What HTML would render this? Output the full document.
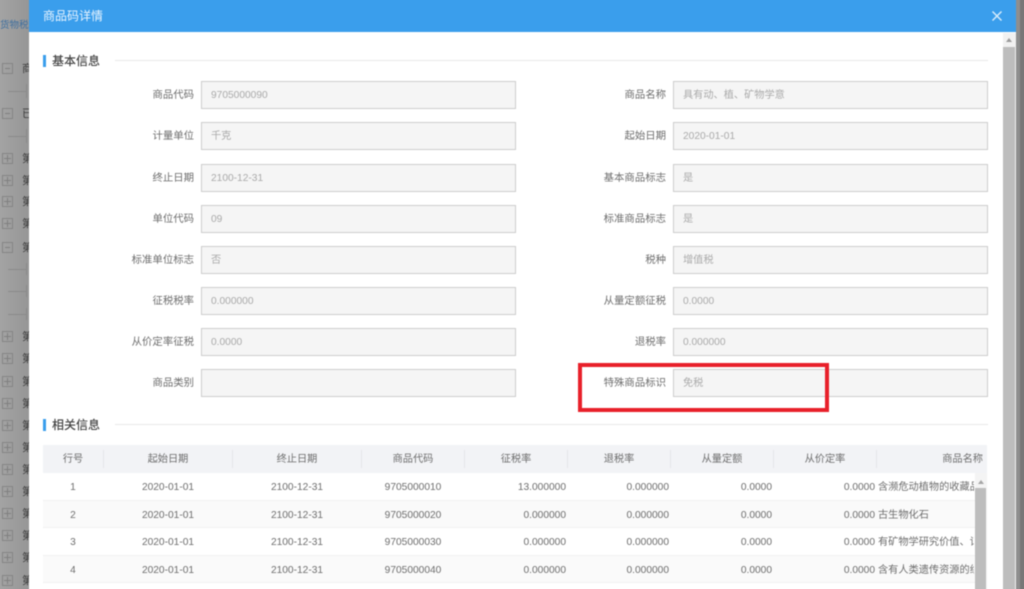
<!DOCTYPE html>
<html lang="zh">
<head>
<meta charset="utf-8">
<title>商品码详情</title>
<style>
html,body{margin:0;padding:0;width:1024px;height:589px;overflow:hidden;background:#9e9e9e}
#clip{position:absolute;left:0;top:0;width:1024px;height:589px;overflow:hidden;contain:strict}
#root{position:absolute;left:0;top:0;width:1024px;height:589px;overflow:visible;filter:blur(.55px);font-family:"Liberation Sans","Noto Sans CJK SC",sans-serif;color:#666}
#root div{position:absolute;box-sizing:border-box;white-space:nowrap}
.bk{left:-6px;top:-6px;width:35px;height:601px;background:linear-gradient(90deg,#a6a6a6,#969696)}
.brt{left:1016px;top:-6px;width:14px;height:601px;background:linear-gradient(90deg,#8e8e8e,#8e8e8e 4px,#777 4px,#777)}
.tb{left:2px;width:11px;height:11px;border:1px solid #858585;background:linear-gradient(#808080,#808080) center/5px 1px no-repeat}
.p{background:linear-gradient(#808080,#808080) center/7px 1px no-repeat,linear-gradient(#808080,#808080) center/1px 7px no-repeat}
.tt{left:22px;width:7px;overflow:hidden;font-size:11px;line-height:12px;color:#3c3c3c}
.tl{background:#8a8a8a}
.m{left:29px;top:0;width:987px;height:595px;background:#fff}
.h{left:29px;top:-6px;width:987px;height:38px;background:#3a9eec;color:#e8f4ff;font-size:12px;line-height:32px;padding:6px 0 0 14px}
.bar{left:43px;width:3px;height:12px;background:#3a9eec}
.st{left:52px;font-size:12px;line-height:16px;color:#444;font-weight:500}
.ln{left:115px;width:873px;height:1px;background:#e8e8e8}
.l{width:150px;height:28px;line-height:29px;text-align:right;font-size:10.4px;color:#6e6e6e}
.i{width:315px;height:28px;background:#f5f5f5;border:1px solid #cdcdcd;line-height:28px;padding-left:9px;font-size:10.2px;color:#aaa}
.th{top:445px;left:43px;width:944px;height:28px;background:#f2f3f6}
.dv{top:450px;width:1px;height:18px;background:#e4e5e9}
.c{height:16px;line-height:16px;font-size:10.2px;color:#6e6e6e;text-align:center}
.r{text-align:right}
.tr{left:43px;width:932px;height:27px;background:#fafafa}
.hl{left:43px;width:932px;height:1px;background:#f0f0f0}
.rb{left:578px;top:363px;width:251px;height:49px;border:4px solid #e8202a}
</style>
</head>
<body>
<div id="clip">
<div id="root">
<div class="bk"></div>
<div class="brt"></div>
<div class="c" style="left:0;top:18px;width:29px;overflow:hidden;text-align:left;color:#3f6f9f;font-size:9.5px">货物税</div>

<div class="tb" style="top:63px"></div><div class="tt" style="top:63px">商</div>
<div class="tb" style="top:108px"></div><div class="tt" style="top:108px">已</div>
<div class="tb p" style="top:153px"></div><div class="tt" style="top:153px">第</div>
<div class="tb p" style="top:175px"></div><div class="tt" style="top:175px">第</div>
<div class="tb p" style="top:196px"></div><div class="tt" style="top:196px">第</div>
<div class="tb p" style="top:218px"></div><div class="tt" style="top:218px">第</div>
<div class="tb" style="top:242px"></div><div class="tt" style="top:242px">第</div>
<div class="tb p" style="top:331px"></div><div class="tt" style="top:331px">第</div>
<div class="tb p" style="top:353px"></div><div class="tt" style="top:353px">第</div>
<div class="tb p" style="top:376px"></div><div class="tt" style="top:376px">第</div>
<div class="tb p" style="top:398px"></div><div class="tt" style="top:398px">第</div>
<div class="tb p" style="top:420px"></div><div class="tt" style="top:420px">第</div>
<div class="tb p" style="top:442px"></div><div class="tt" style="top:442px">第</div>
<div class="tb p" style="top:464px"></div><div class="tt" style="top:464px">第</div>
<div class="tb p" style="top:486px"></div><div class="tt" style="top:486px">第</div>
<div class="tb p" style="top:508px"></div><div class="tt" style="top:508px">第</div>
<div class="tb p" style="top:530px"></div><div class="tt" style="top:530px">第</div>
<div class="tb p" style="top:552px"></div><div class="tt" style="top:552px">第</div>
<div class="tb p" style="top:575px"></div><div class="tt" style="top:575px">第</div>
<div class="tl" style="left:8px;top:91px;width:18px;height:1px"></div>
<div class="tl" style="left:8px;top:136px;width:18px;height:1px"></div>
<div class="tl" style="left:8px;top:269px;width:18px;height:1px"></div>
<div class="tl" style="left:8px;top:291px;width:18px;height:1px"></div>
<div class="tl" style="left:8px;top:314px;width:18px;height:1px"></div>
<div class="tl" style="left:26px;top:84px;width:1px;height:14px"></div>
<div class="tl" style="left:26px;top:129px;width:1px;height:14px"></div>
<div class="tl" style="left:26px;top:263px;width:1px;height:12px"></div>
<div class="tl" style="left:26px;top:285px;width:1px;height:12px"></div>
<div class="tl" style="left:26px;top:308px;width:1px;height:12px"></div>

<div class="m"></div>
<div class="h">商品码详情</div>
<svg style="position:absolute;left:991px;top:10px" width="12" height="12" viewBox="0 0 12 12"><path d="M1.5 1.5L10.5 10.5M10.5 1.5L1.5 10.5" stroke="#d6ebfb" stroke-width="1.5" fill="none"/></svg>

<div class="bar" style="top:55px"></div>
<div class="st" style="top:53px">基本信息</div>
<div class="ln" style="top:60px"></div>

<div class="l" style="left:44px;top:81px">商品代码</div><div class="i" style="left:201px;top:81px">9705000090</div>
<div class="l" style="left:516px;top:81px">商品名称</div><div class="i" style="left:673px;top:81px">具有动、植、矿物学意</div>
<div class="l" style="left:44px;top:122px">计量单位</div><div class="i" style="left:201px;top:122px">千克</div>
<div class="l" style="left:516px;top:122px">起始日期</div><div class="i" style="left:673px;top:122px">2020-01-01</div>
<div class="l" style="left:44px;top:164px">终止日期</div><div class="i" style="left:201px;top:164px">2100-12-31</div>
<div class="l" style="left:516px;top:164px">基本商品标志</div><div class="i" style="left:673px;top:164px">是</div>
<div class="l" style="left:44px;top:205px">单位代码</div><div class="i" style="left:201px;top:205px">09</div>
<div class="l" style="left:516px;top:205px">标准商品标志</div><div class="i" style="left:673px;top:205px">是</div>
<div class="l" style="left:44px;top:246px">标准单位标志</div><div class="i" style="left:201px;top:246px">否</div>
<div class="l" style="left:516px;top:246px">税种</div><div class="i" style="left:673px;top:246px">增值税</div>
<div class="l" style="left:44px;top:287px">征税税率</div><div class="i" style="left:201px;top:287px">0.000000</div>
<div class="l" style="left:516px;top:287px">从量定额征税</div><div class="i" style="left:673px;top:287px">0.0000</div>
<div class="l" style="left:44px;top:328px">从价定率征税</div><div class="i" style="left:201px;top:328px">0.0000</div>
<div class="l" style="left:516px;top:328px">退税率</div><div class="i" style="left:673px;top:328px">0.000000</div>
<div class="l" style="left:44px;top:369px">商品类别</div><div class="i" style="left:201px;top:369px"></div>
<div class="l" style="left:516px;top:369px">特殊商品标识</div><div class="i" style="left:673px;top:369px">免税</div>
<div class="rb"></div>

<div class="bar" style="top:419px"></div>
<div class="st" style="top:417px">相关信息</div>
<div class="ln" style="top:424px"></div>

<div class="th"></div>
<div class="dv" style="left:103px"></div>
<div class="dv" style="left:232px"></div>
<div class="dv" style="left:361px"></div>
<div class="dv" style="left:464px"></div>
<div class="dv" style="left:567px"></div>
<div class="dv" style="left:670px"></div>
<div class="dv" style="left:773px"></div>
<div class="dv" style="left:876px"></div>
<div class="c" style="left:43px;width:60px;top:452px">行号</div>
<div class="c" style="left:104px;width:128px;top:452px">起始日期</div>
<div class="c" style="left:233px;width:128px;top:452px">终止日期</div>
<div class="c" style="left:362px;width:102px;top:452px">商品代码</div>
<div class="c" style="left:465px;width:102px;top:452px">征税率</div>
<div class="c" style="left:568px;width:102px;top:452px">退税率</div>
<div class="c" style="left:671px;width:102px;top:452px">从量定额</div>
<div class="c" style="left:774px;width:102px;top:452px">从价定率</div>
<div class="c r" style="left:877px;width:106px;top:452px">商品名称</div>

<div class="tr" style="top:501px"></div>
<div class="tr" style="top:555px"></div>
<div class="hl" style="top:500px"></div>
<div class="hl" style="top:527px"></div>
<div class="hl" style="top:555px"></div>
<div class="hl" style="top:582px"></div>

<div class="c" style="left:43px;width:60px;top:480px">1</div>
<div class="c" style="left:104px;width:128px;top:480px">2020-01-01</div>
<div class="c" style="left:233px;width:128px;top:480px">2100-12-31</div>
<div class="c" style="left:362px;width:102px;top:480px">9705000010</div>
<div class="c r" style="left:465px;width:101px;top:480px">13.000000</div>
<div class="c r" style="left:568px;width:101px;top:480px">0.000000</div>
<div class="c r" style="left:671px;width:101px;top:480px">0.0000</div>
<div class="c r" style="left:774px;width:101px;top:480px">0.0000</div>
<div class="c" style="left:878px;width:96px;top:480px;text-align:left;overflow:hidden">含濒危动植物的收藏品</div>

<div class="c" style="left:43px;width:60px;top:508px">2</div>
<div class="c" style="left:104px;width:128px;top:508px">2020-01-01</div>
<div class="c" style="left:233px;width:128px;top:508px">2100-12-31</div>
<div class="c" style="left:362px;width:102px;top:508px">9705000020</div>
<div class="c r" style="left:465px;width:101px;top:508px">0.000000</div>
<div class="c r" style="left:568px;width:101px;top:508px">0.000000</div>
<div class="c r" style="left:671px;width:101px;top:508px">0.0000</div>
<div class="c r" style="left:774px;width:101px;top:508px">0.0000</div>
<div class="c" style="left:878px;width:96px;top:508px;text-align:left;overflow:hidden">古生物化石</div>

<div class="c" style="left:43px;width:60px;top:535px">3</div>
<div class="c" style="left:104px;width:128px;top:535px">2020-01-01</div>
<div class="c" style="left:233px;width:128px;top:535px">2100-12-31</div>
<div class="c" style="left:362px;width:102px;top:535px">9705000030</div>
<div class="c r" style="left:465px;width:101px;top:535px">0.000000</div>
<div class="c r" style="left:568px;width:101px;top:535px">0.000000</div>
<div class="c r" style="left:671px;width:101px;top:535px">0.0000</div>
<div class="c r" style="left:774px;width:101px;top:535px">0.0000</div>
<div class="c" style="left:878px;width:96px;top:535px;text-align:left;overflow:hidden">有矿物学研究价值、记</div>

<div class="c" style="left:43px;width:60px;top:563px">4</div>
<div class="c" style="left:104px;width:128px;top:563px">2020-01-01</div>
<div class="c" style="left:233px;width:128px;top:563px">2100-12-31</div>
<div class="c" style="left:362px;width:102px;top:563px">9705000040</div>
<div class="c r" style="left:465px;width:101px;top:563px">0.000000</div>
<div class="c r" style="left:568px;width:101px;top:563px">0.000000</div>
<div class="c r" style="left:671px;width:101px;top:563px">0.0000</div>
<div class="c r" style="left:774px;width:101px;top:563px">0.0000</div>
<div class="c" style="left:878px;width:96px;top:563px;text-align:left;overflow:hidden">含有人类遗传资源的组</div>

<div style="left:975px;top:473px;width:12px;height:122px;background:#f4f4f4"></div>
<div style="left:975px;top:488px;width:11px;height:107px;background:#bdbdbd"></div>
<svg style="position:absolute;left:977px;top:479px" width="8" height="6" viewBox="0 0 8 6"><path d="M1 5L4 1L7 5Z" fill="#a5a5a5"/></svg>

<div style="left:1003px;top:33px;width:13px;height:562px;background:#f1f1f1"></div>
<div style="left:1003px;top:47px;width:12px;height:548px;background:#bdbdbd"></div>
<svg style="position:absolute;left:1005px;top:37px" width="8" height="6" viewBox="0 0 8 6"><path d="M1 5L4 1L7 5Z" fill="#9a9a9a"/></svg>
</div>
</div>
</body>
</html>
